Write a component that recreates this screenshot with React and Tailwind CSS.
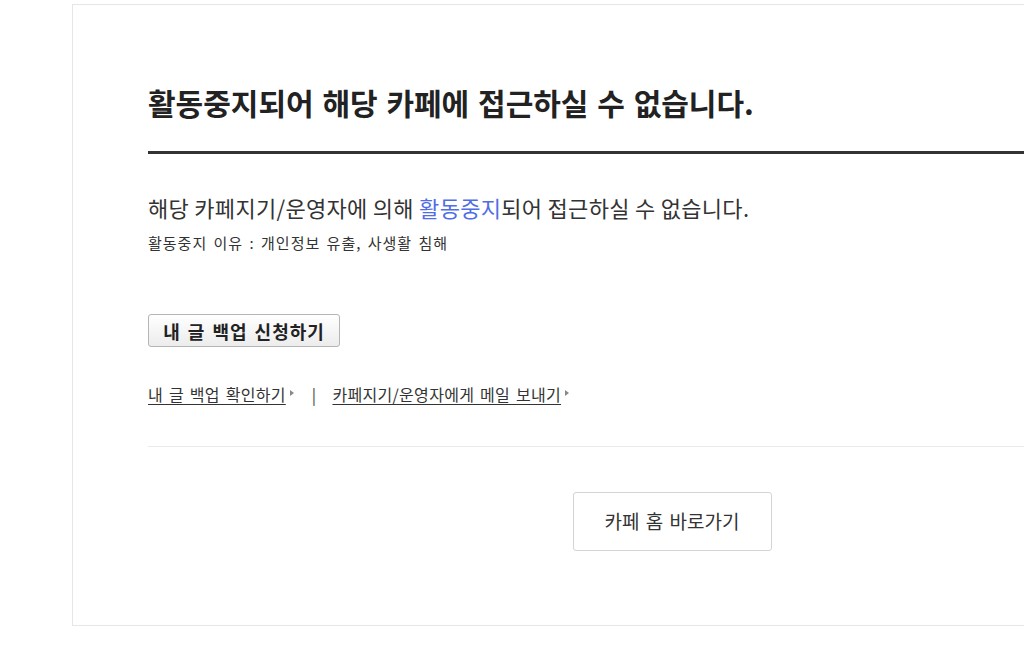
import React from 'react';

const font = { fontFamily: '"Noto Sans CJK KR", "Noto Sans", sans-serif' };

function Arrow() {
  return <span className="inline-block ml-[4px] mb-[2px] w-0 h-0 border-y-[3px] border-y-transparent border-l-[4px] border-l-[#888] align-middle" />;
}

export default function App() {
  return (
    <div className="w-screen h-screen overflow-hidden bg-white text-[#333]" style={font}>
      <div className="ml-[72px] mt-[4px] w-[1200px] h-[622px] border border-[#e6e6e6] px-[75px] pt-[77px]">
        <h2 className="text-[30px] font-bold leading-[40px] text-[#222] pb-[29px] border-b-[3px] border-[#333] [word-spacing:2px]">
          활동중지되어 해당 카페에 접근하실 수 없습니다.
        </h2>

        <p className="mt-[38px] text-[22px] leading-[30px] tracking-[0.3px]">
          해당 카페지기/운영자에 의해 <span className="text-[#4f6ee6]">활동중지</span>되어 접근하실 수 없습니다.
        </p>
        <p className="mt-[10px] text-[15px] leading-[22px] tracking-[1px] [word-spacing:2px] text-[#333]">
          활동중지 이유 : 개인정보 유출, 사생활 침해
        </p>

        <button className="mt-[60px] w-[192px] h-[33px] rounded-[3px] border border-[#b5b5b5] bg-gradient-to-b from-white to-[#ececec] text-[18px] leading-[24px] font-bold tracking-[1px] [word-spacing:2px] text-[#222]">
          내 글 백업 신청하기
        </button>

        <div className="mt-[35px] flex items-center text-[16px] leading-[24px] tracking-[0.3px] [word-spacing:2px] text-[#333]">
          <a className="underline underline-offset-[3px]">내 글 백업 확인하기</a>
          <Arrow />
          <span className="ml-[18px] mr-[16px] text-[#444]">|</span>
          <a className="underline underline-offset-[3px]">카페지기/운영자에게 메일 보내기</a>
          <Arrow />
        </div>

        <div className="mt-[40px] border-t border-[#ebebeb]" />

        <div className="mt-[45px] flex justify-center">
          <button className="w-[199px] h-[59px] rounded-[3px] border border-[#d4d4d4] bg-white text-[19px] [word-spacing:2px] text-[#333]">
            카페 홈 바로가기
          </button>
        </div>
      </div>
    </div>
  );
}
